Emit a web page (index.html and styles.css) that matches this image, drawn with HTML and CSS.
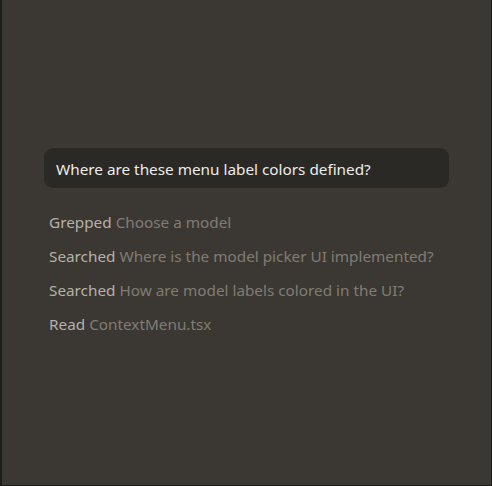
FILE: index.html
```html
<!DOCTYPE html>
<html>
<head>
<meta charset="utf-8">
<link rel="stylesheet" href="styles.css">
</head>
<body>
<div class="frame">
  <div class="content">
    <div class="query">Where are these menu label colors defined?</div>
    <ul class="steps">
      <li class="step"><span class="verb">Grepped</span> <span class="detail">Choose a model</span></li>
      <li class="step"><span class="verb">Searched</span> <span class="detail">Where is the model picker UI implemented?</span></li>
      <li class="step"><span class="verb">Searched</span> <span class="detail">How are model labels colored in the UI?</span></li>
      <li class="step"><span class="verb">Read</span> <span class="detail">ContextMenu.tsx</span></li>
    </ul>
  </div>
</div>
</body>
</html>
```
FILE: styles.css
```css
html, body {
  margin: 0;
  padding: 0;
  width: 492px;
  height: 486px;
  background: #1c1c19;
  overflow: hidden;
}
.frame {
  margin-left: 2px;
  width: 489px;
  height: 485px;
  background: #3b3833;
  font-family: "Noto Sans", "Open Sans", sans-serif;
  font-size: 15.3px;
}
.content {
  padding: 148px 0 0 42px;
  width: 405px;
}
.query {
  background: #2a2925;
  border-radius: 9px;
  height: 40px;
  box-sizing: border-box;
  padding: 1px 12px 0 12px;
  display: flex;
  align-items: center;
  color: #ececea;
}
.steps {
  list-style: none;
  margin: 17px 0 0 0;
  padding: 0 0 0 5px;
}
.step {
  height: 34px;
  line-height: 34px;
  white-space: nowrap;
}
.verb { color: #b5b1aa; }
.detail { color: #807c75; }
```
